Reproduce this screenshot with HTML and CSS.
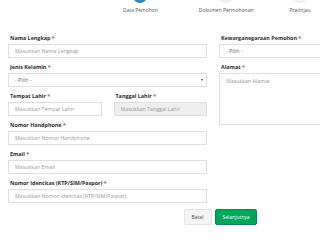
FILE: index.html
```html
<!DOCTYPE html>
<html lang="id">
<head>
<meta charset="utf-8">
<title>Data Pemohon</title>
<link rel="stylesheet" href="styles.css">
</head>
<body>
<div class="page">
  <div class="stepper">
    <div class="step active"><span class="dot"></span><span class="step-label">Data Pemohon</span></div>
    <div class="step"><span class="dot"></span><span class="step-label">Dokumen Permohonan</span></div>
    <div class="step"><span class="dot"></span><span class="step-label">Pratinjau</span></div>
  </div>

  <form class="form">
    <div class="col">
      <div class="group">
        <label class="label">Nama Lengkap <span class="req">*</span></label>
        <input class="control" type="text" placeholder="Masukkan Nama Lengkap">
      </div>
      <div class="group">
        <label class="label">Jenis Kelamin <span class="req">*</span></label>
        <div class="select"><span>- Pilih -</span><i class="caret"></i></div>
      </div>
      <div class="group split">
        <div>
          <label class="label">Tempat Lahir <span class="req">*</span></label>
          <input class="control" type="text" placeholder="Masukkan Tempat Lahir">
        </div>
        <div>
          <label class="label">Tanggal Lahir <span class="req">*</span></label>
          <input class="control disabled" type="text" placeholder="Masukkan Tanggal Lahir" disabled>
        </div>
      </div>
      <div class="group">
        <label class="label">Nomor Handphone <span class="req">*</span></label>
        <input class="control" type="text" placeholder="Masukkan Nomor Handphone">
      </div>
      <div class="group">
        <label class="label">Email <span class="req">*</span></label>
        <input class="control" type="text" placeholder="Masukkan Email">
      </div>
      <div class="group">
        <label class="label">Nomor Identitas (KTP/SIM/Paspor) <span class="req">*</span></label>
        <input class="control" type="text" placeholder="Masukkan Nomor Identitas (KTP/SIM/Paspor)">
      </div>
    </div>
    <div class="col">
      <div class="group">
        <label class="label">Kewarganegaraan Pemohon <span class="req">*</span></label>
        <div class="select"><span>- Pilih -</span><i class="caret"></i></div>
      </div>
      <div class="group">
        <label class="label">Alamat <span class="req">*</span></label>
        <textarea class="control area" placeholder="Masukkan Alamat"></textarea>
      </div>
    </div>
  </form>

  <div class="actions">
    <button class="btn btn-default" type="button">Batal</button>
    <button class="btn btn-success" type="button">Selanjutnya</button>
  </div>
</div>
</body>
</html>
```
FILE: styles.css
```css
html, body {
  margin: 0;
  padding: 0;
  background: #fff;
  overflow: hidden;
}
body {
  font-family: "Open Sans", "Noto Sans", sans-serif;
  color: #333;
}
.page {
  width: 440px;
}
.stepper {
  display: flex;
  gap: 36px;
  padding-left: 123px;
  margin-top: -13px;
}
.step {
  display: flex;
  flex-direction: column;
  align-items: center;
  gap: 4px;
}
.step.active {
  margin-right: 5px;
}
.dot {
  width: 16px;
  height: 16px;
  border-radius: 50%;
  background: #f2f2f2;
  border: 1px solid #ececec;
  box-sizing: border-box;
}
.step.active .dot {
  background: #2f84c8;
  border-color: #2f84c8;
}
.step-label {
  font-size: 5px;
  line-height: 6px;
  color: #555;
  white-space: nowrap;
}
.form {
  display: grid;
  grid-template-columns: 199px 1fr;
  column-gap: 12px;
  padding: 0 8px;
  margin-top: 21px;
}
.group {
  margin-bottom: 5px;
}
.split {
  display: grid;
  grid-template-columns: 1fr 1fr;
  column-gap: 12px;
}
.label {
  display: block;
  height: 10px;
  line-height: 9px;
  font-size: 5.4px;
  font-weight: 700;
  color: #2b2b2b;
  padding-left: 2px;
  white-space: nowrap;
}
.req {
  color: #dd4b39;
}
.control {
  display: block;
  box-sizing: border-box;
  width: 100%;
  height: 14px;
  margin: 0;
  padding: 0 6px;
  border: 1px solid #dcdfe4;
  border-radius: 0;
  background: #fff;
  font-family: "Open Sans", "Noto Sans", sans-serif;
  font-size: 5.3px;
  color: #555;
  outline: none;
  appearance: none;
}
.control::placeholder {
  color: #9a9a9a;
  opacity: 1;
}
.control.disabled {
  background: #eeeeee;
}
.area {
  height: 52px;
  padding-top: 4px;
  resize: none;
  line-height: 6px;
}
.select {
  display: flex;
  align-items: center;
  justify-content: space-between;
  box-sizing: border-box;
  height: 14px;
  padding: 0 3px 0 6px;
  border: 1px solid #dcdfe4;
  font-size: 5.3px;
  color: #666;
}
.caret {
  width: 0;
  height: 0;
  border-left: 1.5px solid transparent;
  border-right: 1.5px solid transparent;
  border-top: 2px solid #333;
}
.actions {
  display: flex;
  justify-content: center;
  gap: 3px;
  margin-top: 1px;
}
.btn {
  height: 16px;
  padding: 0 7px;
  font-family: "Open Sans", "Noto Sans", sans-serif;
  font-size: 5px;
  line-height: 14px;
  border: 1px solid transparent;
  border-radius: 2px;
}
.btn-default {
  width: 28px;
  background: #f4f4f4;
  border-color: #e3e3e3;
  color: #444;
}
.btn-success {
  width: 42px;
  background: #00a65a;
  border-color: #008d4c;
  color: #fff;
}
```
